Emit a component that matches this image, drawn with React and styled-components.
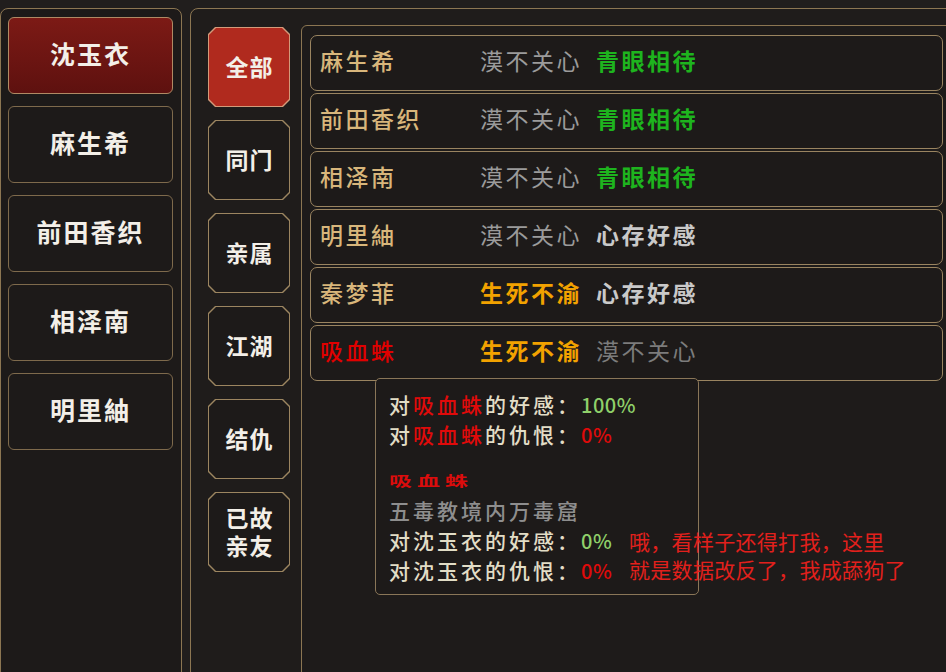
import React from "react";
import styled, { createGlobalStyle } from "styled-components";

const GOLD = "#8c7652";

const Global = createGlobalStyle`
  html, body { margin: 0; padding: 0; background: #211e1d; overflow: hidden; }
  body { font-family: "Noto Sans CJK SC", "Noto Sans", sans-serif; }
  #root { width: 946px; height: 672px; overflow: hidden; position: relative; }
`;

const Page = styled.div`
  display: flex;
  gap: 8px;
  padding-top: 8px;
  width: 980px;
  height: 700px;
  box-sizing: border-box;
  background: #211e1d;
`;

const LeftPanel = styled.div`
  width: 182px;
  flex: none;
  box-sizing: border-box;
  border: 1px solid ${GOLD};
  border-radius: 8px;
  background: #1d1a19;
  padding: 8px 8px 0 7px;
  display: flex;
  flex-direction: column;
  gap: 12px;
`;

const PersonButton = styled.div`
  height: 77px;
  box-sizing: border-box;
  border: 1px solid ${(p) => (p.$active ? "#b08a64" : "#7e6a4c")};
  border-radius: 6px;
  background: ${(p) =>
    p.$active ? "linear-gradient(180deg, #7c1a15 0%, #6c1512 55%, #5e110f 100%)" : "#1d1a19"};
  display: flex;
  align-items: center;
  justify-content: center;
  padding-bottom: 5px;
  color: #f3efe8;
  font-size: 25px;
  font-weight: 700;
  letter-spacing: 2px;
`;

const MiddlePanel = styled.div`
  flex: 1;
  box-sizing: border-box;
  border: 1px solid ${GOLD};
  border-radius: 8px;
  background: #1f1c1b;
  display: flex;
  padding: 17px 0 0 17px;
  gap: 11px;
`;

const TabColumn = styled.div`
  width: 82px;
  flex: none;
  display: flex;
  flex-direction: column;
  gap: 13px;
  padding-top: 1px;
`;

const chamfer = `polygon(7px 0, calc(100% - 7px) 0, 100% 7px, 100% calc(100% - 7px), calc(100% - 7px) 100%, 7px 100%, 0 calc(100% - 7px), 0 7px)`;

const TabFrame = styled.div`
  height: 80px;
  padding: 1px;
  box-sizing: border-box;
  background: ${(p) => (p.$active ? "#d39a7a" : "#9c8560")};
  clip-path: ${chamfer};
`;

const TabInner = styled.div`
  height: 100%;
  box-sizing: border-box;
  background: ${(p) => (p.$active ? "#b02a1e" : "#1d1a19")};
  clip-path: ${chamfer};
  display: flex;
  align-items: center;
  justify-content: center;
  text-align: center;
  color: #f3efe8;
  font-size: 23px;
  font-weight: 700;
  line-height: 28px;
  letter-spacing: 1px;
  padding: 0 0 2px 1px;
  white-space: pre-line;
`;

const ListPanel = styled.div`
  flex: 1;
  position: relative;
  box-sizing: border-box;
  border: 1px solid ${GOLD};
  border-radius: 6px 0 0 0;
  background: #1e1b1a;
  margin-top: -1px;
  padding: 9px 9px 0 8px;
  display: flex;
  flex-direction: column;
  gap: 2px;
  margin-right: -1px;
`;

const Row = styled.div`
  height: 56px;
  box-sizing: border-box;
  border: 1px solid #9a8460;
  border-radius: 7px;
  background: #1d1a19;
  display: flex;
  align-items: center;
  padding: 0 0 6px 9px;
  font-size: 23px;
  letter-spacing: 2.5px;
  width: 633px;
`;

const Name = styled.span`
  width: 160px;
  color: ${(p) => p.$color || "#d8b67b"};
  font-weight: 500;
`;

const Status = styled.span`
  color: ${(p) => p.$color};
  font-weight: ${(p) => p.$weight || 500};
  margin-right: 14px;
`;

const Tooltip = styled.div`
  position: absolute;
  left: 73px;
  top: 352px;
  width: 324px;
  height: 217px;
  box-sizing: border-box;
  border: 1px solid #8a7658;
  border-radius: 5px;
  background: #1d1a19;
  padding: 10px 0 0 13px;
  display: flex;
  flex-direction: column;
  font-size: 21px;
  letter-spacing: 3px;
  color: #e2ddc6;
  font-weight: 500;
`;

const TipLine = styled.div`
  height: 30px;
  line-height: 30px;
  white-space: nowrap;
  color: ${(p) => p.$color || "inherit"};
`;

const Hl = styled.span`
  color: ${(p) => p.$color};
`;

const Num = styled.span`
  color: ${(p) => p.$color};
  letter-spacing: 0.5px;
  font-size: 20px;
`;

const TipTitle = styled.div`
  margin-top: 16px;
  height: 30px;
  line-height: 30px;
  color: #dc0c0c;
  font-size: 23px;
  font-weight: 700;
  letter-spacing: 5px;
  transform: scaleY(0.6);
  transform-origin: left center;
`;

const Note = styled.div`
  position: absolute;
  left: 327px;
  top: 501px;
  color: #e2201c;
  font-size: 21px;
  line-height: 28px;
  font-weight: 400;
  letter-spacing: 0.3px;
  white-space: nowrap;
`;

const people = ["沈玉衣", "麻生希", "前田香织", "相泽南", "明里紬"];
const tabs = ["全部", "同门", "亲属", "江湖", "结仇", "已故\n亲友"];

const C = {
  gray: "#9b9b9b",
  dim: "#7c7c7c",
  green: "#1eb41e",
  orange: "#f2a200",
  light: "#c9c9c9",
};

const rows = [
  { name: "麻生希", a: ["漠不关心", C.gray, 400], b: ["青眼相待", C.green, 700] },
  { name: "前田香织", a: ["漠不关心", C.gray, 400], b: ["青眼相待", C.green, 700] },
  { name: "相泽南", a: ["漠不关心", C.gray, 400], b: ["青眼相待", C.green, 700] },
  { name: "明里紬", a: ["漠不关心", C.gray, 400], b: ["心存好感", C.light, 700] },
  { name: "秦梦菲", a: ["生死不渝", C.orange, 700], b: ["心存好感", C.light, 700] },
  { name: "吸血蛛", red: true, a: ["生死不渝", C.orange, 700], b: ["漠不关心", C.dim, 400] },
];

export default function App() {
  return (
    <>
      <Global />
      <Page>
        <LeftPanel>
          {people.map((p, i) => (
            <PersonButton key={p} $active={i === 0}>
              {p}
            </PersonButton>
          ))}
        </LeftPanel>
        <MiddlePanel>
          <TabColumn>
            {tabs.map((t, i) => (
              <TabFrame key={t} $active={i === 0}>
                <TabInner $active={i === 0}>{t}</TabInner>
              </TabFrame>
            ))}
          </TabColumn>
          <ListPanel>
            {rows.map((r) => (
              <Row key={r.name}>
                <Name $color={r.red ? "#e00000" : undefined}>{r.name}</Name>
                <Status $color={r.a[1]} $weight={r.a[2]}>{r.a[0]}</Status>
                <Status $color={r.b[1]} $weight={r.b[2]}>{r.b[0]}</Status>
              </Row>
            ))}
            <Tooltip>
              <TipLine>
                对<Hl $color="#e00a0a">吸血蛛</Hl>的好感：<Num $color="#8fd06a">100%</Num>
              </TipLine>
              <TipLine>
                对<Hl $color="#e00a0a">吸血蛛</Hl>的仇恨：<Num $color="#e00a0a">0%</Num>
              </TipLine>
              <TipTitle>吸血蛛</TipTitle>
              <TipLine $color="#8e8e8e">五毒教境内万毒窟</TipLine>
              <TipLine>
                对沈玉衣的好感：<Num $color="#8fd06a">0%</Num>
              </TipLine>
              <TipLine>
                对沈玉衣的仇恨：<Num $color="#e00a0a">0%</Num>
              </TipLine>
            </Tooltip>
            <Note>
              哦，看样子还得打我，这里
              <br />
              就是数据改反了，我成舔狗了
            </Note>
          </ListPanel>
        </MiddlePanel>
      </Page>
    </>
  );
}
